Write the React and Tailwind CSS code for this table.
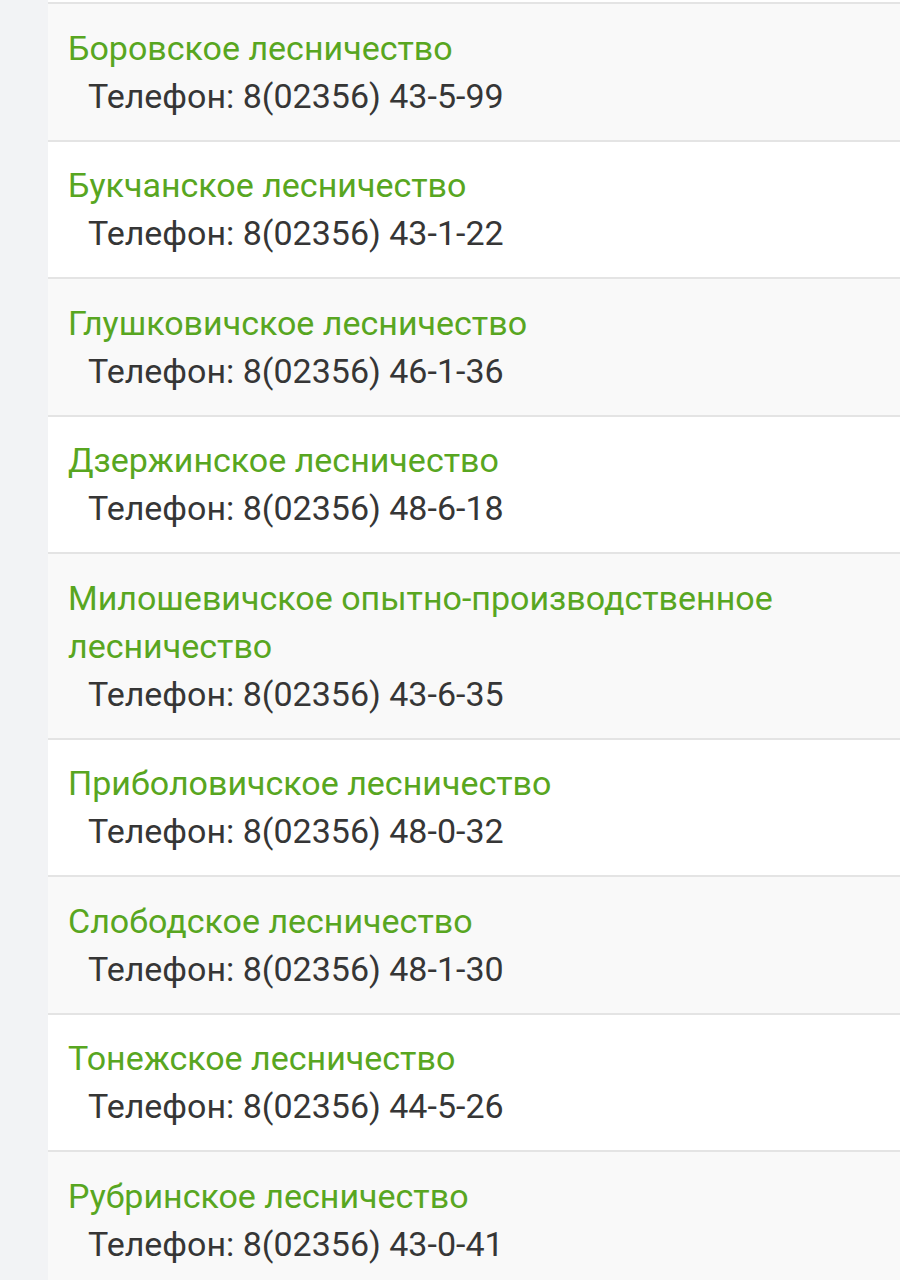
import React from 'react';

const forestries = [
  { name: 'Боровское лесничество', phone: '8(02356) 43-5-99' },
  { name: 'Букчанское лесничество', phone: '8(02356) 43-1-22' },
  { name: 'Глушковичское лесничество', phone: '8(02356) 46-1-36' },
  { name: 'Дзержинское лесничество', phone: '8(02356) 48-6-18' },
  { name: 'Милошевичское опытно-производственное лесничество', phone: '8(02356) 43-6-35' },
  { name: 'Приболовичское лесничество', phone: '8(02356) 48-0-32' },
  { name: 'Слободское лесничество', phone: '8(02356) 48-1-30' },
  { name: 'Тонежское лесничество', phone: '8(02356) 44-5-26' },
  { name: 'Рубринское лесничество', phone: '8(02356) 43-0-41' },
];

const App = () => {
  return (
    <div
      className="flex h-[1280px] overflow-hidden bg-[#f2f3f5]"
      style={{ fontFamily: 'Roboto, "Noto Sans", sans-serif' }}
    >
      <div className="w-[48px] shrink-0" />
      <div className="flex-1">
        <div className="h-[2px] bg-white" />
        {forestries.map((item, index) => (
          <div
            key={index}
            className={`border-t-2 border-[#e4e4e4] pt-[19.5px] pb-[20px] pl-[20px] pr-4 text-[34px] leading-[48px] ${
              index % 2 === 0 ? 'bg-[#f9f9f9]' : 'bg-white'
            }`}
          >
            <div className="text-[#58a621]">{item.name}</div>
            <div className="pl-[20px] text-[#363636]">Телефон: {item.phone}</div>
          </div>
        ))}
      </div>
    </div>
  );
};

export default App;
